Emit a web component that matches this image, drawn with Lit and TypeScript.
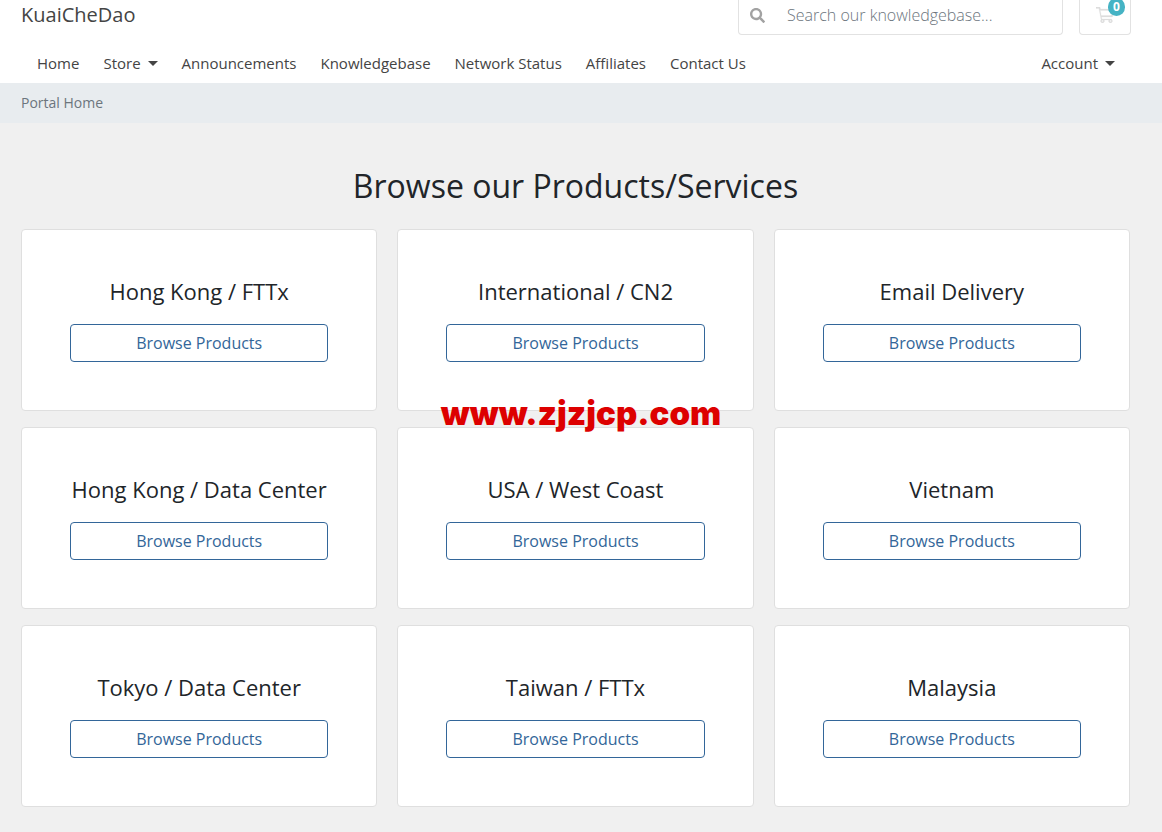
import { LitElement, html, css } from "lit";
import { customElement, property } from "lit/decorators.js";

@customElement("product-card")
class ProductCard extends LitElement {
  @property() name = "";

  static styles = css`
    :host {
      display: block;
    }
    .card {
      box-sizing: border-box;
      height: 100%;
      padding: 48px;
      background: #fff;
      border: 1px solid #dfdfdf;
      border-radius: 4px;
      text-align: center;
    }
    .title {
      margin: 0 -16px 20px;
      font-size: 22px;
      line-height: 26px;
      font-weight: 400;
      color: #212529;
    }
    .browse {
      display: block;
      padding: 6px 12px;
      border: 1px solid #336699;
      border-radius: 4px;
      color: #336699;
      font-size: 16px;
      line-height: 24px;
      text-decoration: none;
    }
    .browse:hover {
      background: #336699;
      color: #fff;
    }
  `;

  render() {
    return html`
      <article class="card">
        <h3 class="title">${this.name}</h3>
        <a class="browse" href="#">Browse Products</a>
      </article>
    `;
  }
}

@customElement("app-root")
class AppRoot extends LitElement {
  private links = ["Home", "Store", "Announcements", "Knowledgebase", "Network Status", "Affiliates", "Contact Us"];

  private products = [
    "Hong Kong / FTTx",
    "International / CN2",
    "Email Delivery",
    "Hong Kong / Data Center",
    "USA / West Coast",
    "Vietnam",
    "Tokyo / Data Center",
    "Taiwan / FTTx",
    "Malaysia",
  ];

  static styles = css`
    :host {
      display: block;
      position: relative;
      min-height: 100vh;
      background: #f0f0f0;
      color: #212529;
      font-family: "Open Sans", "Noto Sans", sans-serif;
      font-size: 16px;
      line-height: 24px;
    }
    .header {
      background: #fff;
    }
    .inner {
      padding: 0 32px 0 21px;
    }
    .header .inner {
      padding-right: 31px;
    }
    .topbar {
      display: flex;
      align-items: flex-start;
      height: 35px;
    }
    .brand {
      margin-right: auto;
      font-size: 20px;
      line-height: 30px;
      color: #444;
      text-decoration: none;
    }
    .search,
    .cart {
      box-sizing: border-box;
      display: flex;
      height: 35px;
      border: 1px solid #e2e2e2;
      border-top: 0;
      border-radius: 0 0 4px 4px;
    }
    .search {
      width: 325px;
      margin-right: 16px;
    }
    .search-button {
      display: flex;
      align-items: center;
      padding: 0 12px 4px 11px;
      border: 0;
      background: none;
      color: #a2a2a2;
    }
    .search-input {
      flex: 1;
      min-width: 0;
      padding: 0 12px 4px 10px;
      border: 0;
      outline: 0;
      background: none;
      color: #495057;
      font: 300 16px/24px "Open Sans", sans-serif;
    }
    .search-input::placeholder {
      color: #6c757d;
      opacity: 1;
    }
    .cart {
      position: relative;
      width: 52px;
      align-items: center;
      justify-content: center;
      padding-bottom: 4px;
      color: #ddd;
    }
    .badge {
      position: absolute;
      top: -2px;
      right: 5px;
      width: 17px;
      height: 18px;
      border-radius: 9px;
      background: #45b3c4;
      color: #fff;
      font-size: 12px;
      line-height: 18px;
      font-weight: 700;
      text-align: center;
    }
    .nav {
      display: flex;
      gap: 24px;
      padding: 16px 16px 8px;
      font-size: 15px;
    }
    .nav-link {
      display: flex;
      align-items: center;
      gap: 7px;
      color: #444;
      text-decoration: none;
    }
    .account {
      margin-left: auto;
    }
    .caret {
      border: 5px solid transparent;
      border-top-color: currentColor;
      border-bottom: 0;
    }
    .breadcrumb {
      padding-top: 8px;
      padding-bottom: 8px;
      background: #e8ecef;
      color: #6c757d;
      font-size: 14px;
    }
    .main {
      padding-top: 44px;
      padding-bottom: 24px;
    }
    .heading {
      margin: 0 0 24px;
      font-size: 32px;
      line-height: 38px;
      font-weight: 400;
      text-align: center;
    }
    .grid {
      display: grid;
      grid-template-columns: repeat(3, minmax(0, 1fr));
      gap: 16px 20px;
    }
    .watermark {
      position: absolute;
      top: 393px;
      left: 0;
      right: 0;
      text-align: center;
      color: #d00;
      font: 900 33px/40px Inter, "DejaVu Sans", sans-serif;
      pointer-events: none;
    }
  `;

  render() {
    return html`
      <header class="header">
        <div class="inner">
          <div class="topbar">
            <a class="brand" href="#">KuaiCheDao</a>
            <form class="search" role="search" @submit=${(e: Event) => e.preventDefault()}>
              <button class="search-button" aria-label="Search">
                <svg width="15" height="15" viewBox="0 0 512 512" fill="currentColor" aria-hidden="true">
                  <path d="M505 442.700L405.300 343c-4.500-4.500-10.600-7-17-7H372c27.600-35.300 44-79.700 44-128C416 93.100 322.900 0 208 0S0 93.100 0 208s93.100 208 208 208c48.300 0 92.700-16.400 128-44v16.300c0 6.400 2.500 12.500 7 17l99.700 99.700c9.400 9.400 24.600 9.400 33.900 0l28.300-28.300c9.400-9.400 9.400-24.600.1-34zM208 336c-70.700 0-128-57.200-128-128 0-70.700 57.200-128 128-128 70.700 0 128 57.200 128 128 0 70.700-57.200 128-128 128z" />
                </svg>
              </button>
              <input class="search-input" type="search" aria-label="Search our knowledgebase" placeholder="Search our knowledgebase..." />
            </form>
            <a class="cart" href="#" aria-label="Shopping cart">
              <svg width="18" height="16" viewBox="0 0 576 512" fill="currentColor" stroke="currentColor" stroke-width="8" aria-hidden="true">
                <path d="M551.991 64H144.280l-8.726-44.608C133.350 8.128 123.478 0 112 0H12C5.373 0 0 5.373 0 12v24c0 6.627 5.373 12 12 12h80.240l69.594 355.701C150.796 415.201 144 430.802 144 448c0 35.346 28.654 64 64 64s64-28.654 64-64a63.681 63.681 0 0 0-8.583-32h145.167a63.681 63.681 0 0 0-8.583 32c0 35.346 28.654 64 64 64 35.346 0 64-28.654 64-64 0-17.993-7.435-34.240-19.388-45.868C506.022 391.891 496.760 384 485.328 384H189.280l-12.520-64h331.381c11.368 0 21.177-7.976 23.496-19.105l43.331-208C578.592 77.991 567.215 64 551.991 64zM208 472c-13.234 0-24-10.766-24-24s10.766-24 24-24 24 10.766 24 24-10.766 24-24 24zm256 0c-13.234 0-24-10.766-24-24s10.766-24 24-24 24 10.766 24 24-10.766 24-24 24zm23.438-200H167.370l-31.304-160h384.705l-33.333 160z" />
              </svg>
              <span class="badge">0</span>
            </a>
          </div>
          <nav class="nav">
            ${this.links.map(
              (text) => html`<a class="nav-link" href="#">${text}${text === "Store" ? html`<span class="caret"></span>` : ""}</a>`
            )}
            <a class="nav-link account" href="#">Account<span class="caret"></span></a>
          </nav>
        </div>
      </header>
      <div class="inner breadcrumb">Portal Home</div>
      <main class="inner main">
        <h1 class="heading">Browse our Products/Services</h1>
        <div class="grid">
          ${this.products.map((name) => html`<product-card .name=${name}></product-card>`)}
        </div>
      </main>
      <div class="watermark">www.zjzjcp.com</div>
    `;
  }
}
